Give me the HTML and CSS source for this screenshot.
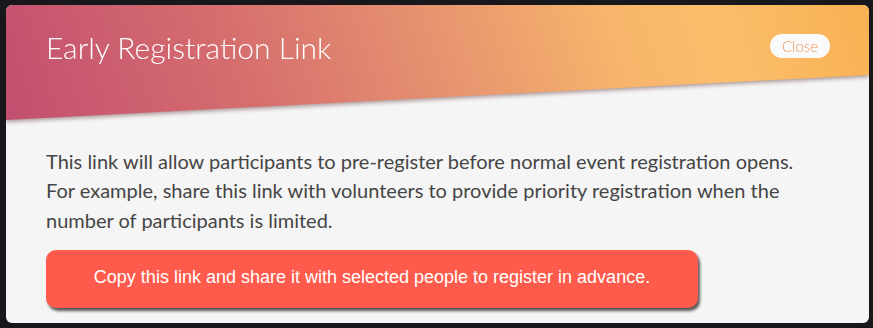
FILE: index.html
```html
<!DOCTYPE html>
<html>
<head>
<meta charset="utf-8">
<link rel="stylesheet" href="styles.css">
</head>
<body>
<div class="modal">
  <div class="head-wrap">
    <div class="head">
      <h1 class="title">Early Registration Link</h1>
      <button class="close">Close</button>
    </div>
  </div>
  <div class="content">
    <p class="desc">This link will allow participants to pre-register before normal event registration opens. For example, share this link with volunteers to provide priority registration when the number of participants is limited.</p>
    <button class="copy">Copy this link and share it with selected people to register in advance.</button>
  </div>
</div>
</body>
</html>
```
FILE: styles.css
```css
html, body {
  margin: 0;
  padding: 0;
  background: #18171c;
}
body {
  padding: 5px 4px 5px 6px;
  height: 328px;
  box-sizing: border-box;
}
.modal {
  width: 863px;
  height: 318px;
  background: #f5f5f5;
  border-radius: 6px;
  overflow: hidden;
  display: flex;
  flex-direction: column;
}
.head-wrap {
  height: 115px;
  filter: drop-shadow(0 2px 2px rgba(80, 30, 30, 0.45));
}
.head {
  height: 116px;
  box-sizing: border-box;
  padding: 24px 39px 0 40px;
  display: flex;
  justify-content: space-between;
  align-items: flex-start;
  background: linear-gradient(72deg, #c24f70 0%, #d66e6e 28%, #e69270 50%, #f7b46b 70%, #fbbd6b 82%, #f9b152 100%);
  clip-path: polygon(0 0, 100% 0, 100% 70px, 0 115px);
}
.title {
  margin: 0;
  font-family: Lato, "Liberation Sans", sans-serif;
  font-weight: 300;
  font-size: 30px;
  line-height: 36px;
  color: #ffffff;
}
.close {
  margin-top: 5px;
  height: 24px;
  padding: 0 12px;
  border: none;
  border-radius: 12px;
  background: #fbfafa;
  color: #ec955f;
  font-family: Lato, "Liberation Sans", sans-serif;
  font-weight: 300;
  font-size: 15px;
  line-height: 24px;
}
.content {
  padding: 27px 40px 0 40px;
  display: flex;
  flex-direction: column;
  align-items: flex-start;
}
.desc {
  margin: 0;
  max-width: 765px;
  font-family: Lato, "Liberation Sans", sans-serif;
  font-size: 20px;
  line-height: 29.25px;
  color: #454545;
}
.copy {
  margin-top: 15px;
  width: 652px;
  height: 58px;
  border: none;
  border-radius: 10px;
  background: #ff5b4c;
  color: #ffffff;
  font-family: "Liberation Sans", Arial, sans-serif;
  font-size: 18px;
  box-shadow: 2px 3px 3px rgba(0, 0, 0, 0.65);
  padding: 0 0 2px 0;
}
```
